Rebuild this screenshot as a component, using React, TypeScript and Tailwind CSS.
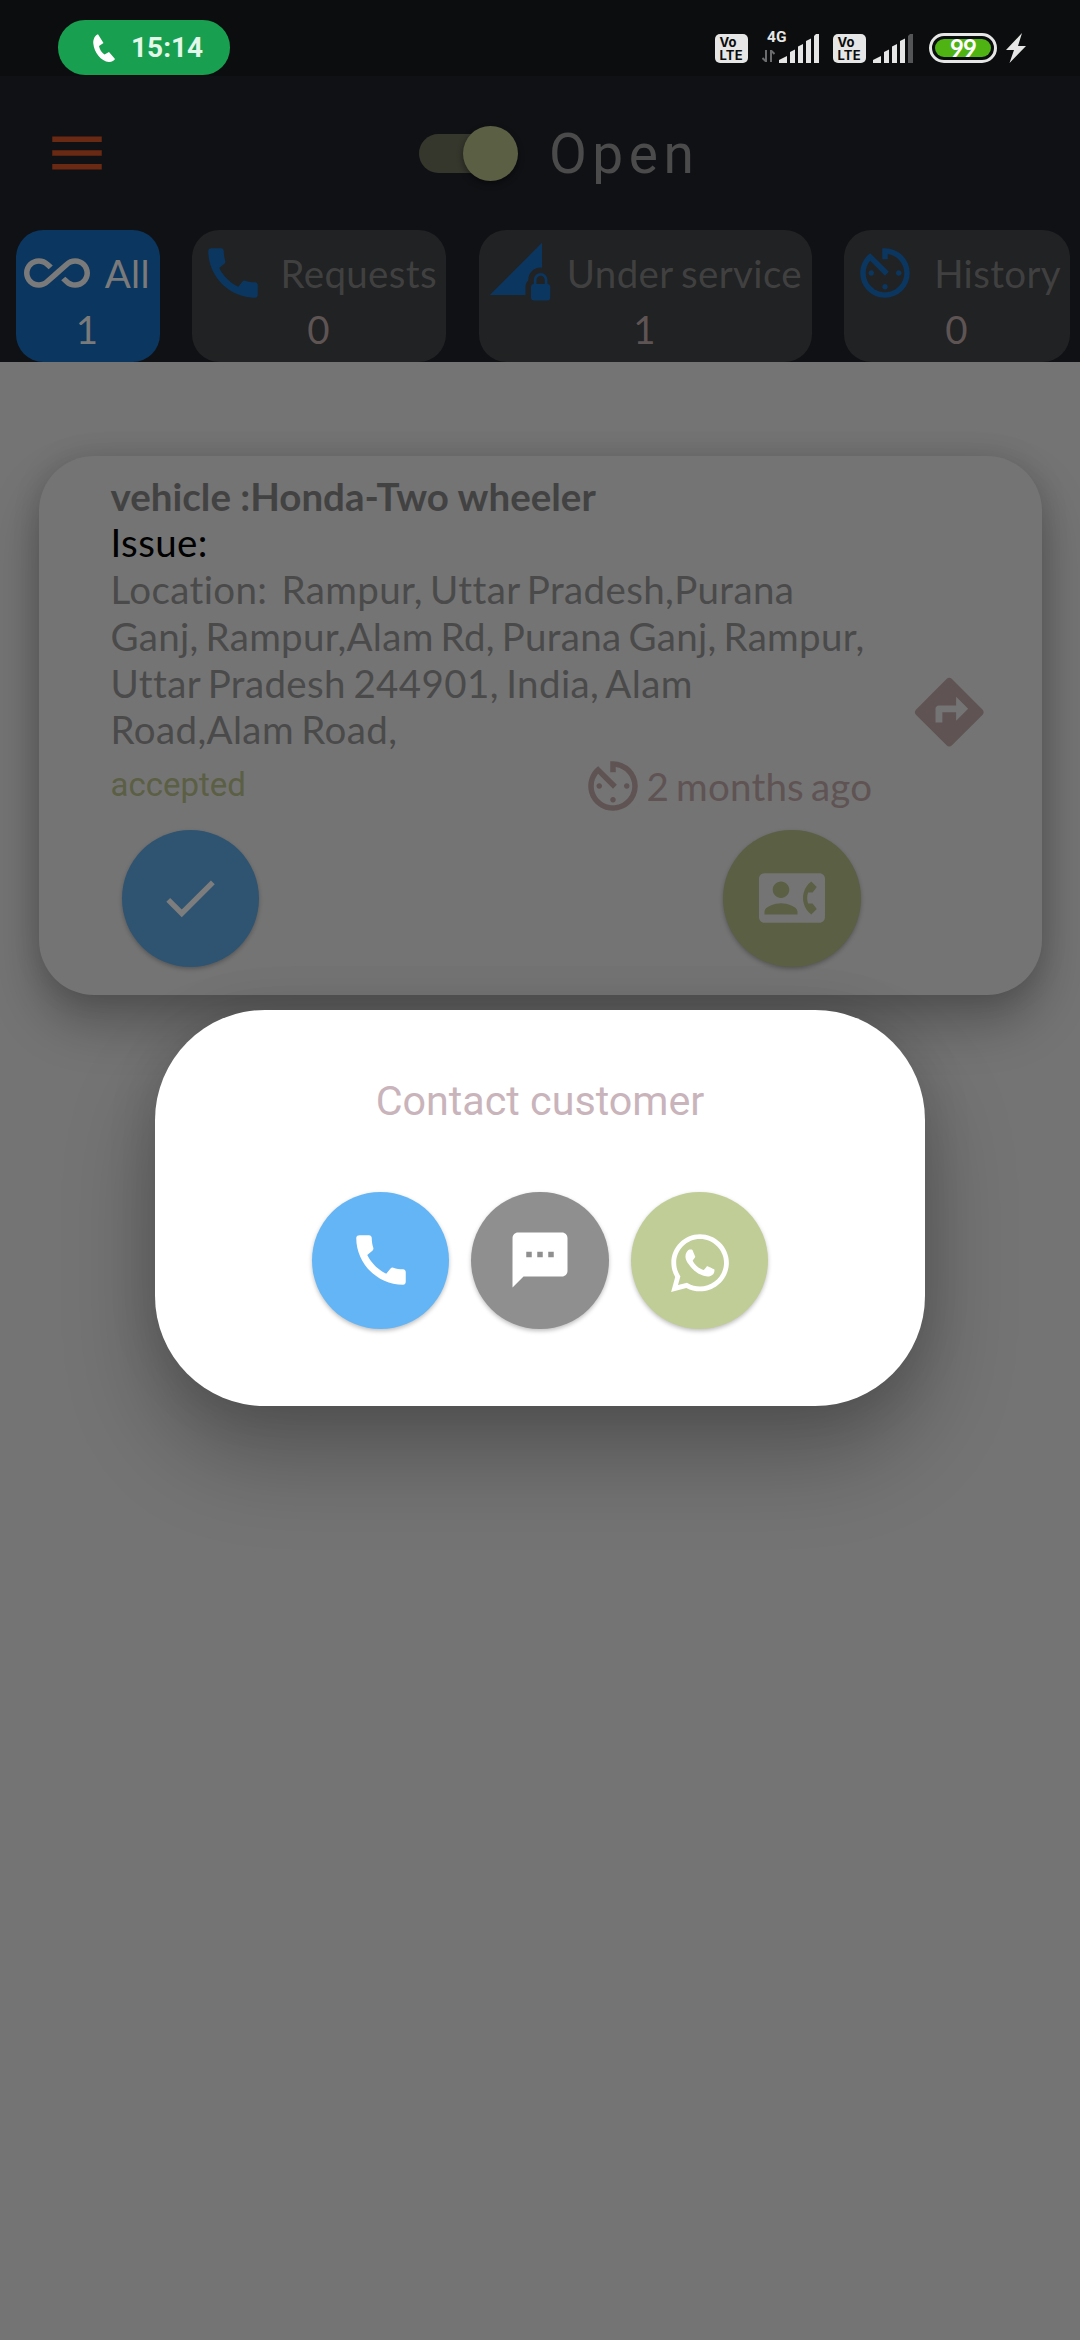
import React from "react";
import {
  MdMenu, MdAllInclusive, MdCall, MdNetworkLocked, MdAvTimer, MdContactPhone, MdDone, MdSms,
} from "react-icons/md";
import { FaWhatsapp } from "react-icons/fa";

function Volte() {
  return (
    <div className="flex h-[29px] w-[33px] flex-col items-center justify-center rounded-[5px] bg-[#e6e6e6] font-['Inter'] text-[13px] leading-[13px] font-bold text-[#0b0d0e]">
      <span className="w-[24px] text-left">Vo</span>
      <span className="w-[24px] text-left tracking-[0.2px]">LTE</span>
    </div>
  );
}

function Bars({ last }: { last: string }) {
  return (
    <svg width="40" height="29" viewBox="0 0 40 29" fill="#e6e6e6">
      <path d="M0 29v-3l8-4v7zM11 29V18l5-2.500V29zM19 29V12.500l5-2.500V29zM27 29V7l5-2.500V29z" />
      <path d="M35 29V2l2-2h3v29z" fill={last} />
    </svg>
  );
}

function StatusBar() {
  return (
    <div className="relative flex h-[76px] bg-[#0b0d0e] pt-[20px] pl-[58px]">
      <div className="flex h-[55px] w-[172px] items-center rounded-[27px] bg-[#189f4f] pl-[35px]">
        <svg width="22" height="28" viewBox="0 0 22 28" fill="#fff">
          <path d="M5 0.300C2 1.500 0 5 0.300 9.500C1 18 8 27.500 16 28C19 28 21.500 26.500 22 25L16 18L11.500 20.500C8.500 18.500 6.500 15 6 12L10.500 9Z" />
        </svg>
        <span className="ml-[16px] text-[28px] leading-none font-bold text-[#e3f7ea]">15:14</span>
      </div>
      <div className="ml-[485px] flex h-[45px] items-end pb-[2px]">
        <Volte />
        <div className="ml-[14px] flex h-[32px] w-[17px] flex-col">
          <span className="ml-[5px] text-[15.500px] leading-[13px] font-bold text-[#e6e6e6]">4G</span>
          <svg className="mt-[6px]" width="13" height="12" viewBox="0 0 13 12" fill="none" stroke="#6b6c6d" strokeWidth="2">
            <path d="M4 0v11.500L0.500 8M9 12V0.500L12.500 4" />
          </svg>
        </div>
        <Bars last="#e6e6e6" />
        <div className="ml-[14px]"><Volte /></div>
        <div className="ml-[7px]"><Bars last="#545556" /></div>
        <div className="ml-[16px] flex h-[30px] w-[68px] items-center justify-center rounded-full border-[3px] border-[#e6e6e6]">
          <div className="flex h-[18px] w-[56px] items-center justify-center rounded-full bg-[#4fb314] font-['Lato'] text-[24px] leading-none font-bold tracking-[-1px] text-white">99</div>
        </div>
        <svg className="ml-[9px]" width="20" height="30" viewBox="0 0 20 30" fill="#e6e6e6">
          <path d="M16 0L0 17h8L3.500 30L20 13h-8z" />
        </svg>
      </div>
    </div>
  );
}

function Tab({ className, icon, label, count, active }: { className: string; icon: React.ReactNode; label: string; count: string; active?: boolean }) {
  return (
    <div className={`flex h-[132px] shrink-0 flex-col rounded-[27.5px] font-['Lato'] text-[38.5px] leading-[46px] tracking-[0.35px] [word-spacing:-2px] ${active ? "bg-[#0b365f] text-[#7a7a7a]" : "bg-[#212223] text-[#404040]"} ${className}`}>
      <div className="flex h-[76px] items-center justify-between pt-[10px]">
        {icon}
        <span className="whitespace-nowrap">{label}</span>
      </div>
      <div className={`text-center ${active ? "text-[#7a7a7a]" : "text-[#5f5454]"}`}>{count}</div>
    </div>
  );
}

function Directions({ className }: { className: string }) {
  return (
    <svg className={className} width="82.5" height="82.5" viewBox="0 0 24 24" fill="#5f5353">
      <path d="M21.710 11.290l-9-9c-.39-.39-1.020-.39-1.410 0l-9 9c-.39.39-.39 1.020 0 1.410l9 9c.39.39 1.020.39 1.410 0l9-9c.39-.38.39-1.010 0-1.410zM14 14.500V12h-4v3H8v-4c0-.55.45-1 1-1h5V7.500l3.500 3.500-3.500 3.500z" />
    </svg>
  );
}

function Round({ className, children }: { className: string; children: React.ReactNode }) {
  return (
    <button className={`flex size-[137.5px] shrink-0 items-center justify-center rounded-full shadow-[0_2px_4px_rgba(0,0,0,0.25)] ${className}`}>{children}</button>
  );
}

export default function App() {
  return (
    <div className="relative h-[2340px] w-[1080px] overflow-hidden bg-[#747474] font-['Roboto',sans-serif]">
      <StatusBar />
      <header className="h-[286px] bg-[#101115]">
        <div className="flex h-[154px] items-center pl-[44px]">
          <MdMenu size={66} color="#6a2913" />
          <div className="relative ml-[309px] h-[39px] w-[94px] rounded-full bg-[#35372d]">
            <div className="absolute top-[-8px] right-[-5px] size-[55px] rounded-full bg-[#5b5f44] shadow-[0_3px_6px_rgba(0,0,0,0.4)]" />
          </div>
          <span className="mt-[2px] ml-[36px] text-[55px] leading-none tracking-[5.500px] text-[#4b4b4b]">Open</span>
        </div>
        <nav className="flex pl-[16px]">
          <Tab className="w-[144px] pr-[10px] pl-[8px]" active icon={<MdAllInclusive size={66} />} label="All" count="1" />
          <Tab className="ml-[32px] w-[254px] pr-[9px] pl-[8px]" icon={<MdCall size={66} color="#0b365f" />} label="Requests" count="0" />
          <Tab className="ml-[33px] w-[333px] pr-[10px] pl-[8px]" icon={<MdNetworkLocked size={66} color="#0b365f" />} label="Under service" count="1" />
          <Tab className="ml-[32px] w-[226px] pr-[9px] pl-[8px]" icon={<MdAvTimer size={66} color="#0b365f" />} label="History" count="0" />
        </nav>
      </header>

      <main className="px-[38.5px] pt-[93.5px]">
        <section className="h-[539px] rounded-[55px] bg-[#747474] pl-[72px] shadow-[0_28px_50px_rgba(0,0,0,0.28),0_0_28px_rgba(0,0,0,0.12)]">
          <div className="flex h-[374px] items-start">
            <div className="w-[767px] pt-[17px] font-['Lato'] text-[38.5px] leading-[46.800px] text-[#4a4a4a] [font-variant-ligatures:none]">
              <p className="font-bold text-[#424242]">vehicle :Honda-Two wheeler</p>
              <p className="tracking-[0.38px] text-black">Issue:</p>
              <p className="whitespace-nowrap tracking-[0.38px] [word-spacing:-3.200px]">Location:&nbsp; Rampur, Uttar Pradesh,Purana</p>
              <p className="whitespace-nowrap tracking-[0.3px] [word-spacing:-3.200px]">Ganj, Rampur,Alam Rd, Purana Ganj, Rampur,</p>
              <p className="whitespace-nowrap tracking-[0.38px] [word-spacing:-2.800px]">Uttar Pradesh 244901, India, Alam</p>
              <p className="whitespace-nowrap tracking-[0.38px] [word-spacing:-2.800px]">Road,Alam Road,</p>
              <div className="flex h-[66px] items-center">
                <span className="mt-[-3px] w-[469px] font-['Roboto'] text-[33px] leading-none text-[#5b5f44]">accepted</span>
                <MdAvTimer size={66} color="#5f5353" />
                <span className="ml-[1px] whitespace-nowrap tracking-[0.2px] text-[#5f5353] [word-spacing:-3px]">2 months ago</span>
              </div>
            </div>
            <Directions className="mt-[215px] ml-[30px]" />
          </div>
          <div className="flex gap-[464px] pl-[11px]">
            <Round className="bg-[#2e5472] text-[#7d7d7d]"><MdDone size={66} /></Round>
            <Round className="bg-[#5b5f44] text-[#747474]"><MdContactPhone size={66} /></Round>
          </div>
        </section>
      </main>

      <div role="dialog" className="absolute top-[1010px] left-[155px] flex h-[395.500px] w-[770px] flex-col items-center rounded-[110px] bg-white pt-[67px] shadow-[0_50px_90px_rgba(0,0,0,0.28),0_0_50px_rgba(0,0,0,0.12)]">
        <h2 className="text-[41.250px] leading-[48px] text-[#c9b4bb]">Contact customer</h2>
        <div className="mt-[66.500px] flex gap-[22px] text-white">
          <Round className="bg-[#64b5f6]"><MdCall size={66} /></Round>
          <Round className="bg-[#8f8f8f]"><MdSms size={66} /></Round>
          <Round className="bg-[#c0cd96]"><FaWhatsapp className="mt-[5px]" size={66} /></Round>
        </div>
      </div>
    </div>
  );
}
